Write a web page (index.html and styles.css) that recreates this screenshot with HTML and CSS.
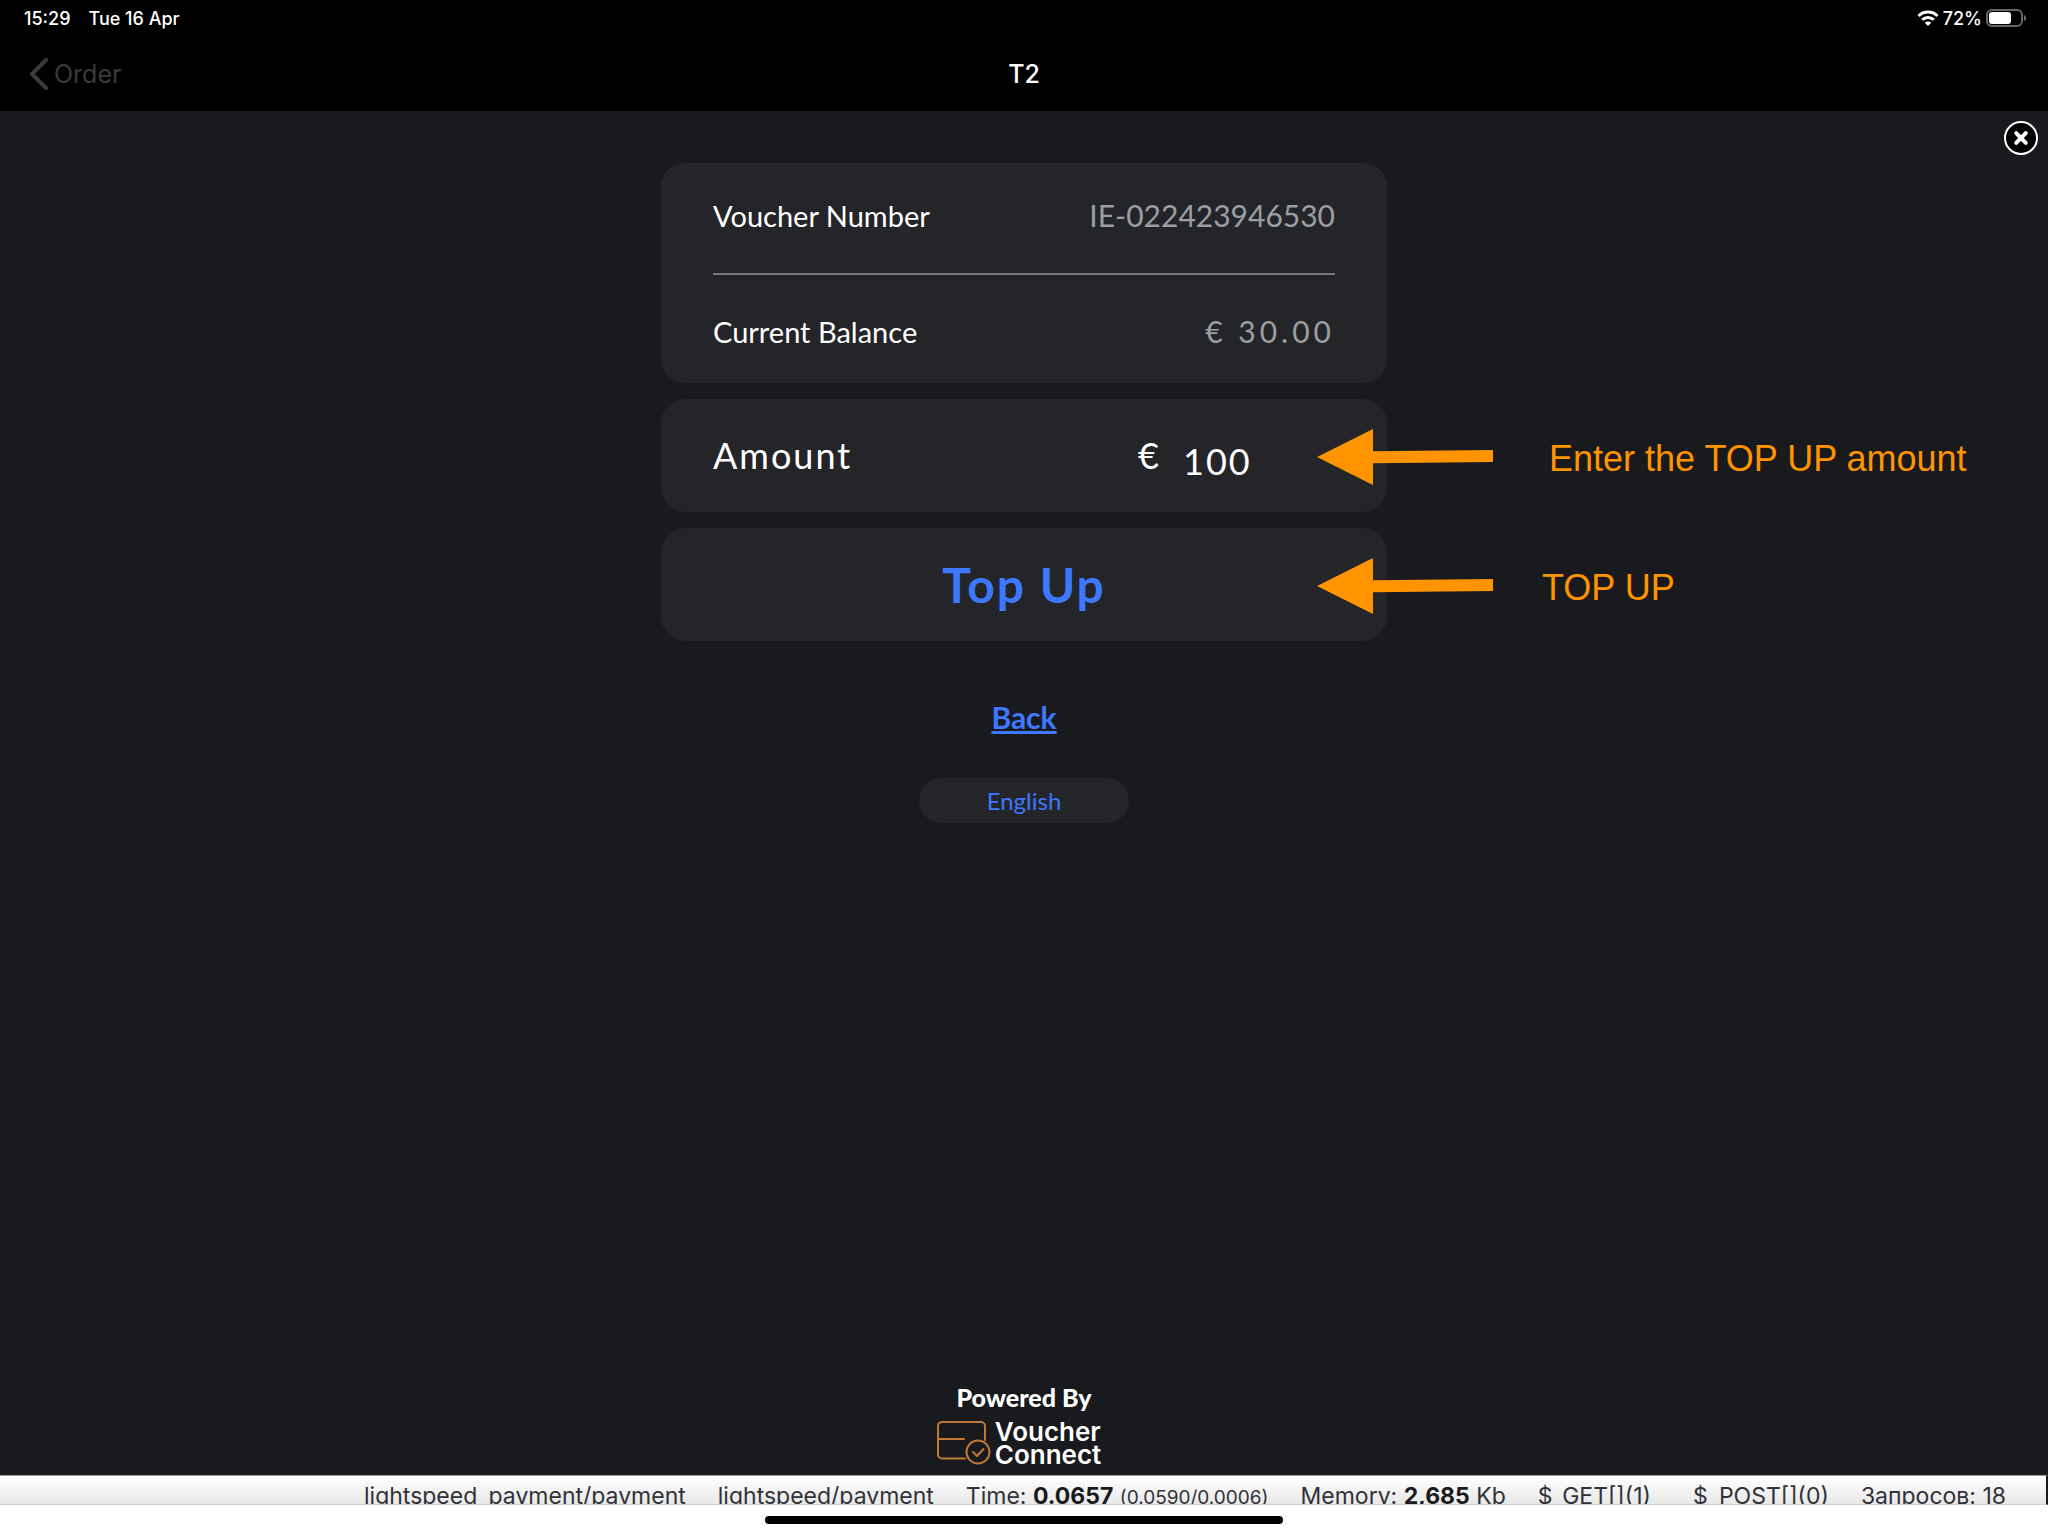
FILE: index.html
```html
<!DOCTYPE html>
<html lang="en">
<head>
<meta charset="utf-8">
<meta name="viewport" content="width=device-width, initial-scale=1">
<title>T2</title>
<link rel="stylesheet" href="styles.css">
</head>
<body>
<header class="top">
  <div class="status">
    <div class="status-group"><span>15:29</span><span>Tue 16 Apr</span></div>
    <div class="status-power">
      <svg width="22" height="16" viewBox="0 0 22 16" aria-hidden="true"><g fill="none" stroke="#fff" stroke-width="3"><path d="M1.5 6a13.5 13.5 0 0 1 19 0"/><path d="M5.2 9.8a8.3 8.3 0 0 1 11.6 0"/></g><path d="M11 16l-3.2-3.3a4.6 4.6 0 0 1 6.4 0z" fill="#fff"/></svg>
      <span>72%</span>
      <svg width="40" height="18" viewBox="0 0 40 18" aria-hidden="true"><rect x="1" y="1" width="35" height="16" rx="5" fill="none" stroke="#666" stroke-width="2"/><rect x="3" y="3" width="22" height="12" rx="3" fill="#fff"/><path d="M38 6c3 1 3 5 0 6z" fill="#666"/></svg>
    </div>
  </div>
  <nav class="nav">
    <a class="nav-back" href="#order"><svg width="18" height="32" viewBox="0 0 18 32" aria-hidden="true"><path d="M16 2L2 16l14 14" fill="none" stroke="#3a3a3a" stroke-width="4" stroke-linecap="round" stroke-linejoin="round"/></svg>Order</a>
    <h1 class="nav-title">T2</h1>
  </nav>
</header>

<main class="page">
  <button class="close" type="button" aria-label="Close"><svg width="36" height="36" viewBox="0 0 36 36" aria-hidden="true"><circle cx="18" cy="18" r="16" fill="#000" stroke="#fff" stroke-width="2"/><path d="M13.2 13.2l9.6 9.6M22.8 13.2l-9.6 9.6" stroke="#fff" stroke-width="4" stroke-linecap="round"/></svg></button>

  <form class="form">
    <dl class="card details">
      <div class="detail"><dt>Voucher Number</dt><dd>IE-022423946530</dd></div>
      <div class="detail"><dt>Current Balance</dt><dd class="spaced">€ 30.00</dd></div>
    </dl>
    <div class="step">
      <div class="card amount">
        <label for="amount">Amount</label>
        <span class="entry"><span>€</span><input id="amount" type="text" inputmode="decimal" value="100"></span>
      </div>
      <div class="note">
        <svg width="176" height="56" viewBox="0 0 176 56" aria-hidden="true"><path d="M0 28L56 0v22.3L176 21v12L56 34.3V56z" fill="#ff9400"/></svg>
        <span class="note-text">Enter the TOP UP amount</span>
      </div>
    </div>
    <div class="step">
      <button class="card submit" type="button">Top Up</button>
      <div class="note note-near">
        <svg width="176" height="56" viewBox="0 0 176 56" aria-hidden="true"><path d="M0 28L56 0v22.3L176 21v12L56 34.3V56z" fill="#ff9400"/></svg>
        <span class="note-text">TOP UP</span>
      </div>
    </div>
  </form>

  <a class="back" href="#back">Back</a>
  <button class="language" type="button">English</button>

  <footer class="powered">
    <p class="powered-text">Powered By</p>
    <div class="brand">
      <svg width="54" height="44" viewBox="0 0 54 44" fill="none" stroke="#c07a38" stroke-width="2" stroke-linecap="round" stroke-linejoin="round" aria-hidden="true"><path d="M28 37.500H5a4 4 0 0 1-4-4V5a4 4 0 0 1 4-4h39a4 4 0 0 1 4 4v14M1 18h26"/><circle cx="41" cy="31" r="11.500"/><path d="M36 31l4 4 6.500-7"/></svg>
      <span class="brand-name">Voucher<br>Connect</span>
    </div>
  </footer>
</main>

<div class="debug">
  <span>lightspeed_payment/payment</span>
  <span>lightspeed/payment</span>
  <span>Time: <b>0.0657</b> <small>(0.0590/0.0006)</small></span>
  <span>Memory: <b>2,685</b> Kb</span>
  <span class="debug-get">$_GET[](1)</span>
  <span>$_POST[](0)</span>
  <span>Запросов: 18</span>
</div>
<div class="home"><div class="home-bar"></div></div>
</body>
</html>
```
FILE: styles.css
```css
* { box-sizing: border-box; }

body {
  margin: 0;
  min-height: 100vh;
  display: flex;
  flex-direction: column;
  background: #191a1e;
  color: #fff;
  font-family: Lato, "Noto Sans", sans-serif;
}

button, input { font: inherit; color: inherit; }
button { border: 0; padding: 0; cursor: pointer; }
svg { display: block; flex: none; }

.top {
  background: #000;
  font-family: Inter, "Liberation Sans", sans-serif;
  height: 111px;
}
.status {
  display: flex;
  justify-content: space-between;
  align-items: center;
  height: 36px;
  padding: 0 22px 0 24px;
  font-size: 18px;
  font-weight: 500;
}
.status-group { display: flex; gap: 18px; }
.status-power { display: flex; align-items: center; gap: 4px; }

.nav {
  display: grid;
  grid-template-columns: 1fr auto 1fr;
  align-items: center;
  height: 76px;
  padding: 0 30px;
}
.nav-back {
  display: flex;
  align-items: center;
  gap: 6px;
  color: #3a3a3a;
  font-size: 25px;
  text-decoration: none;
}
.nav-title { margin: 0; font-size: 25px; font-weight: 500; }

.page {
  position: relative;
  flex: 1;
  display: flex;
  flex-direction: column;
  align-items: center;
  padding: 52px 24px 9px;
}
.close {
  position: absolute;
  top: 9px;
  right: 9px;
  background: none;
  border-radius: 50%;
}

.form {
  width: 100%;
  max-width: 726px;
  display: flex;
  flex-direction: column;
  gap: 16px;
}
.card {
  width: 100%;
  margin: 0;
  border-radius: 24px;
  background: #242529;
}
.details { padding: 0 52px; }
.detail {
  display: flex;
  justify-content: space-between;
  align-items: center;
  height: 110px;
  padding-bottom: 6px;
  font-size: 30px;
}
.detail + .detail {
  padding: 4px 0 0;
  border-top: 2px solid #77787b;
}
.detail dt { font-size: 29px; }
.detail dd { margin: 0; color: #9b9fa2; }
.detail .spaced { letter-spacing: 4px; }

.step { position: relative; }
.amount {
  display: flex;
  justify-content: space-between;
  align-items: center;
  height: 113px;
  padding: 0 52px 2px;
  font-size: 36px;
  letter-spacing: 2px;
}
.entry { display: flex; align-items: center; gap: 22px; }
.entry input {
  width: 152px;
  padding: 12px 0 0;
  border: 0;
  background: none;
  letter-spacing: inherit;
}
.submit {
  display: block;
  height: 113px;
  color: #3d78ff;
  font-size: 48px;
  font-weight: 700;
  letter-spacing: 2px;
}
.note {
  position: absolute;
  left: 656px;
  top: 30px;
  display: flex;
  align-items: center;
  gap: 56px;
  color: #ff9400;
  font-family: "Liberation Sans", Arial, sans-serif;
  font-size: 36px;
  white-space: nowrap;
  pointer-events: none;
}
.note-near { gap: 49px; }
.note-text { padding-top: 4px; }

.back {
  margin-top: 56px;
  color: #3d78ff;
  font-size: 30px;
  font-weight: 700;
  line-height: 40px;
  text-underline-offset: 2px;
}
.language {
  margin-top: 41px;
  width: 210px;
  height: 45px;
  border-radius: 24px;
  background: #242529;
  color: #3d78ff;
  font-size: 24px;
}

.powered { margin-top: auto; }
.powered-text {
  margin: 0 0 8px;
  text-align: center;
  font-size: 25px;
  font-weight: 900;
  line-height: 30px;
}
.brand {
  display: flex;
  align-items: center;
  gap: 4px;
  padding-right: 10px;
}
.brand-name {
  font-family: Inter, sans-serif;
  font-size: 26px;
  font-weight: 600;
  line-height: 23px;
}

.debug {
  display: flex;
  justify-content: flex-end;
  gap: 32px;
  height: 30px;
  padding-right: 40px;
  border-top: 1px solid #999;
  border-right: 2px solid #191a1e;
  border-bottom: 1px solid #ccc;
  overflow: hidden;
  background: linear-gradient(#fff, #e8e8e8);
  color: #303238;
  font-family: Inter, "Liberation Sans", sans-serif;
  font-size: 23px;
  line-height: 40px;
  white-space: nowrap;
}
.debug b { color: #191a1e; }
.debug small { font-size: 19px; }
.debug-get { margin-right: 10px; }

.home {
  display: flex;
  justify-content: center;
  height: 30px;
  padding-top: 11px;
  background: #fff;
}
.home-bar { width: 518px; height: 8px; border-radius: 4px; background: #000; }
```
